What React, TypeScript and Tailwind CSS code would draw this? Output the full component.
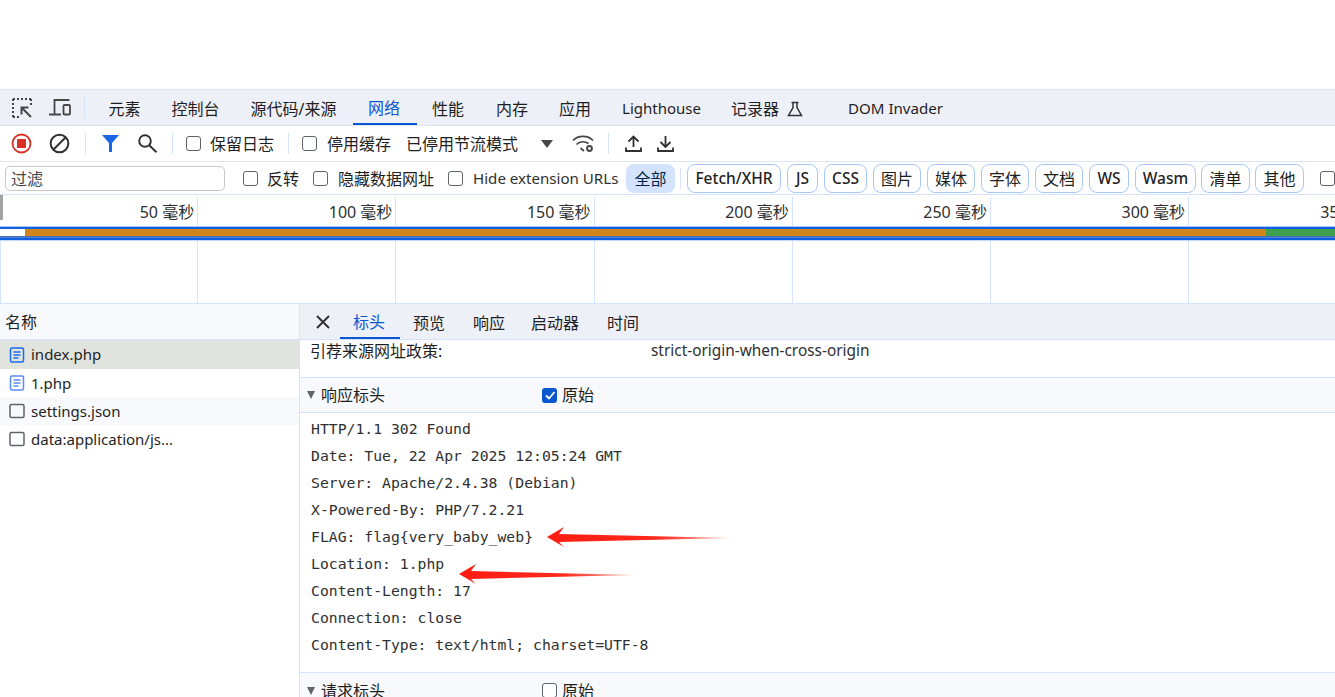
const sans = 'font-["Noto_Sans","Noto_Sans_CJK_SC",sans-serif]';

const mainTabs = [
  { label: '元素', px: 'px-[15.5px]' },
  { label: '控制台', px: 'px-[15.5px]' },
  { label: '源代码/来源', px: 'pl-[15.5px] pr-[16.5px]' },
  { label: '网络', px: 'pl-[15px] pr-[17px]', active: true },
  { label: '性能', px: 'pl-[15px] pr-[16px]' },
  { label: '内存', px: 'px-[16px]' },
  { label: '应用', px: 'pl-[15px] pr-[15.5px]' },
];

const filters = [
  { label: 'Fetch/XHR', w: 'w-[94px]', bold: true },
  { label: 'JS', w: 'w-[31px]', bold: true },
  { label: 'CSS', w: 'w-[43px]', bold: true },
  { label: '图片', w: 'w-[48px]' },
  { label: '媒体', w: 'w-[48px]' },
  { label: '字体', w: 'w-[48px]' },
  { label: '文档', w: 'w-[48px]' },
  { label: 'WS', w: 'w-[40px]', bold: true },
  { label: 'Wasm', w: 'w-[61px]', bold: true },
  { label: '清单', w: 'w-[49px] -ml-px' },
  { label: '其他', w: 'w-[49px] -ml-px' },
];

const ticks = ['50 毫秒', '100 毫秒', '150 毫秒', '200 毫秒', '250 毫秒', '300 毫秒'];

const files = [
  { name: 'index.php', doc: true, bg: 'bg-[#e1e3df]', h: 'h-[29px]' },
  { name: '1.php', doc: true, bg: 'bg-white', h: 'h-[28px]' },
  { name: 'settings.json', doc: false, bg: 'bg-[#f7f9fd]', h: 'h-[28px]' },
  { name: 'data:application/js...', doc: false, bg: 'bg-white', h: 'h-[28px]' },
];

const headers = [
  'HTTP/1.1 302 Found',
  'Date: Tue, 22 Apr 2025 12:05:24 GMT',
  'Server: Apache/2.4.38 (Debian)',
  'X-Powered-By: PHP/7.2.21',
  'FLAG: flag{very_baby_web}',
  'Location: 1.php',
  'Content-Length: 17',
  'Connection: close',
  'Content-Type: text/html; charset=UTF-8',
];

function Box({ className = '' }: { className?: string }) {
  return <span className={`block w-[15px] h-[15px] shrink-0 rounded-[3px] border border-[#5f6368] bg-white ${className}`} />;
}

function Divider({ className = '' }: { className?: string }) {
  return <span className={`block w-px h-[21px] shrink-0 bg-[#d3e3fd] ${className}`} />;
}

function Arrow({ width }: { width: number }) {
  return (
    <svg width={width} height="20" viewBox={`0 0 ${width} 20`} className="block">
      <defs>
        <linearGradient id={`fade${width}`} x1="0" x2="1" y1="0" y2="0">
          <stop offset="0" stopColor="#ff1d12" />
          <stop offset="0.6" stopColor="#ff2a1c" />
          <stop offset="1" stopColor="#ff3a2a" stopOpacity="0.4" />
        </linearGradient>
      </defs>
      <path d={`M0 10 L17 0 L12 7 L${width} 11 L12 15 L17 20 Z`} fill={`url(#fade${width})`} />
    </svg>
  );
}

function DocIcon({ light }: { light?: boolean }) {
  const color = light ? '#5a8cf5' : '#1a6cf0';
  return (
    <svg width="16" height="16" viewBox="0 0 16 16" fill="none" className="shrink-0">
      <rect x="1.5" y="1" width="13" height="14" rx="1.5" stroke={color} strokeWidth="1.5" />
      <path d="M4.5 5h7M4.5 8h7M4.5 11h5" stroke={color} strokeWidth="1.3" />
    </svg>
  );
}

function BlankIcon() {
  return (
    <svg width="16" height="16" viewBox="0 0 16 16" fill="none" className="shrink-0">
      <rect x="1" y="1.5" width="14" height="13" rx="1.5" stroke="#5f6368" strokeWidth="1.5" />
    </svg>
  );
}

function Triangle() {
  return <span className="block w-0 h-0 border-l-[4.5px] border-r-[4.5px] border-t-[8px] border-l-transparent border-r-transparent border-t-[#5f6368]" />;
}

function GridCells({ className = '' }: { className?: string }) {
  return (
    <div className={`flex ${className}`}>
      {ticks.map(t => (
        <div key={t} className="w-[198.2px] shrink-0 border-r first:border-l border-[#d3e3fd]" />
      ))}
    </div>
  );
}

export default function App() {
  return (
    <div className={`h-[697px] w-[1335px] overflow-hidden bg-white text-[#1f1f1f] text-[16px] relative ${sans}`}>
      <div className="h-[89px]" />

      <div className="h-[37px] flex items-stretch bg-[#eef0f7] border-t border-b border-[#dfe4f2]">
        <div className="flex items-center pl-[12px] w-[84px] shrink-0 gap-[17px]">
          <svg width="20" height="20" viewBox="0 0 20 20" fill="none" stroke="#474747" className="shrink-0">
            <path d="M1 1h18M1 1v18M1 19h6M19 1v6" strokeWidth="2" strokeDasharray="2 2" />
            <path d="M9.500 16.500V9.500h7M10 10l9 9" strokeWidth="2" />
          </svg>
          <svg width="22" height="17" viewBox="0 0 22 17" fill="none" stroke="#474747" strokeWidth="1.800" className="shrink-0">
            <path d="M5.500 15V1h15M0 15.500h12" />
            <rect x="14.500" y="6" width="6.500" height="9.500" rx="1" />
          </svg>
        </div>
        <Divider className="self-center" />
        <div className="w-[8px] shrink-0" />
        {mainTabs.map(tab => (
          <div
            key={tab.label}
            className={`flex items-center whitespace-nowrap h-full pt-[2px] ${tab.px} ${tab.active ? 'text-[#0b57d0] border-b-2 border-[#0b57d0]' : ''}`}
          >
            {tab.label}
          </div>
        ))}
        <div className="flex items-center whitespace-nowrap h-full pt-[2px] pl-[15.5px] pr-[15px] text-[15px]">Lighthouse</div>
        <div className="flex items-center whitespace-nowrap h-full pt-[2px] gap-[8px] pl-[15px] pr-[45px]">
          记录器
          <svg width="16" height="16" viewBox="0 0 16 16" fill="none" stroke="#303030" strokeWidth="1.500">
            <path d="M4.500 1.500h7M6 1.500v5L1.500 14.500h13L10 6.500v-5" />
          </svg>
        </div>
        <div className="flex items-center whitespace-nowrap h-full pt-[2px] text-[15.100px]">DOM Invader</div>
      </div>

      <div className="h-[36px] flex items-center border-b border-[#dfe4f2]">
        <div className="w-[11px] shrink-0" />
        <svg width="21" height="21" viewBox="0 0 21 21" fill="none" className="shrink-0">
          <circle cx="10.500" cy="10.500" r="9" stroke="#d93025" strokeWidth="1.800" />
          <rect x="6" y="6" width="9" height="9" rx="0.500" fill="#d93025" />
        </svg>
        <svg width="21" height="21" viewBox="0 0 21 21" fill="none" stroke="#303030" strokeWidth="2" className="ml-[17px] shrink-0">
          <circle cx="10.500" cy="10.500" r="8.800" />
          <path d="M4.500 16.500 16.500 4.500" />
        </svg>
        <Divider className="ml-[15px]" />
        <svg width="17" height="17" viewBox="0 0 17 17" className="ml-[16px] shrink-0">
          <path d="M0 0h17l-7 8v9H7V8z" fill="#1a66e5" />
        </svg>
        <svg width="20" height="19" viewBox="0 0 20 19" fill="none" stroke="#303030" strokeWidth="1.900" className="ml-[19px] shrink-0">
          <circle cx="7" cy="7" r="5.800" />
          <path d="M11.200 11.200 18.500 18.200" />
        </svg>
        <Divider className="ml-[14px]" />
        <Box className="ml-[13px]" />
        <span className="ml-[9px] whitespace-nowrap">保留日志</span>
        <Divider className="ml-[14px]" />
        <Box className="ml-[13px]" />
        <span className="ml-[10px] whitespace-nowrap">停用缓存</span>
        <span className="ml-[15px] whitespace-nowrap">已停用节流模式</span>
        <span className="ml-[23px] block w-0 h-0 shrink-0 border-l-[6px] border-r-[6px] border-t-[8px] border-l-transparent border-r-transparent border-t-[#474747]" />
        <svg width="23" height="19" viewBox="0 0 23 19" fill="none" stroke="#474747" strokeWidth="1.700" className="ml-[19px] shrink-0">
          <path d="M1 6.500C6 1 16 1 21 6.500M4.500 10.500C8 7 13 7 16.500 9.500M8.500 14l3.500 3" />
          <circle cx="17.500" cy="14.500" r="2.400" strokeWidth="2" />
        </svg>
        <Divider className="ml-[13px]" />
        <svg width="17" height="17" viewBox="0 0 17 17" fill="none" stroke="#303030" strokeWidth="1.800" className="ml-[16px] shrink-0">
          <path d="M8.500 12V1.500M3.500 6.500l5-5 5 5M1 12.500v3.500h15v-3.500" />
        </svg>
        <svg width="17" height="17" viewBox="0 0 17 17" fill="none" stroke="#303030" strokeWidth="1.800" className="ml-[15px] shrink-0">
          <path d="M8.500 1v11M3.500 7l5 5 5-5M1 12.500v3.500h15v-3.500" />
        </svg>
      </div>

      <div className="h-[33px] flex items-center border-b border-[#d3e3fd] whitespace-nowrap">
        <div className="ml-[5px] w-[220px] h-[25px] shrink-0 rounded-[5px] border border-[#c7c7c7] px-[5px] pt-px flex items-center text-[#474747]">过滤</div>
        <Box className="ml-[18px]" />
        <span className="ml-[9px] pt-px">反转</span>
        <Box className="ml-[14px]" />
        <span className="ml-[10px] pt-px">隐藏数据网址</span>
        <Box className="ml-[14px]" />
        <span className="ml-[10px] pt-px text-[15.100px] text-[#303030] w-[146px]">Hide extension URLs</span>
        <span className="ml-[7px] w-[49px] h-[29px] shrink-0 rounded-[8px] bg-[#d3e3fd] pt-px text-[#041e49] flex items-center justify-center">全部</span>
        <Divider className="ml-[5px]" />
        <div className="ml-[6px] flex gap-[6px]">
          {filters.map(f => (
            <span
              key={f.label}
              className={`${f.w} h-[29px] shrink-0 rounded-[8px] border border-[#a8c7fa] pt-px flex items-center justify-center text-[#1f1f1f] ${f.bold ? 'font-medium text-[15.500px]' : ''}`}
            >
              {f.label}
            </span>
          ))}
        </div>
        <Box className="ml-[16px]" />
      </div>

      <div className="h-[109px] border-b border-[#d3e3fd] overflow-hidden relative">
        <div className="absolute left-0 top-0 w-[3px] h-[25px] bg-[#a3a3a3]" />
        <div className="flex h-[31px] text-[#303030] pt-[2px] whitespace-nowrap">
          {ticks.map(t => (
            <div key={t} className="w-[198.2px] shrink-0 border-r border-[#d3e3fd] flex items-center justify-end pr-[3px]">{t}</div>
          ))}
          <div className="pl-[131px] flex items-center">350 毫秒</div>
        </div>
        <div className="h-px bg-[#a8c7fa]" />
        <div className="h-[2px] bg-[#0f5fe0]" />
        <div className="h-[7px] flex">
          <div className="w-[25px] bg-white" />
          <div className="flex-1 bg-[#d0861b]" />
          <div className="w-[69px] bg-[#3fa14e]" />
        </div>
        <div className="h-px bg-[#3f6fb0]" />
        <div className="h-px bg-[#4b7fd8]" />
        <div className="h-[2px] bg-[#0f5fe0]" />
        <div className="h-px bg-[#c2d7fb]" />
        <GridCells className="h-[62px]" />
      </div>

      <div className="flex h-[393px]">
        <div className="w-[300px] shrink-0 border-r border-[#d3e3fd]">
          <div className="h-[36px] flex items-center pl-[5px] pt-px bg-[#f7f9fd] border-b border-[#d3e3fd]">名称</div>
          {files.map((f, i) => (
            <div key={f.name} className={`${f.h} ${f.bg} flex items-center pl-[9px] gap-[6px] whitespace-nowrap text-[15px]`}>
              {f.doc ? <DocIcon light={i === 1} /> : <BlankIcon />}
              {f.name}
            </div>
          ))}
        </div>

        <div className="flex-1 min-w-0">
          <div className="h-[36px] flex items-stretch bg-[#eef0f7] border-b border-[#d3e3fd]">
            <svg width="16" height="16" viewBox="0 0 16 16" fill="none" stroke="#303030" strokeWidth="1.900" className="self-center ml-[15px] mr-[9px]">
              <path d="M2 2l12 12M14 2 2 14" />
            </svg>
            <span className="flex items-center pt-[2px] pl-[13px] w-[60px] text-[#0b57d0] border-b-2 border-[#0b57d0]">标头</span>
            <span className="flex items-center pt-[2px] pl-[13px] pr-[15px]">预览</span>
            <span className="flex items-center pt-[2px] pl-[13px] pr-[13px]">响应</span>
            <span className="flex items-center pt-[2px] pl-[13px] pr-[13px]">启动器</span>
            <span className="flex items-center pt-[2px] pl-[15px]">时间</span>
          </div>

          <div className="h-[38px] flex pl-[10px] border-b border-[#d3e3fd] whitespace-nowrap leading-[22px]">
            <span className="w-[341px]">引荐来源网址政策:</span>
            <span className="text-[15.400px] text-[#303030]">strict-origin-when-cross-origin</span>
          </div>

          <div className="h-[35px] flex items-center pl-[7px] bg-[#f7f9fd] border-b border-[#d3e3fd]">
            <Triangle />
            <span className="ml-[6px] w-[221px]">响应标头</span>
            <span className="w-[15px] h-[15px] rounded-[3px] bg-[#0b57d0] flex items-center justify-center">
              <svg width="12" height="12" viewBox="0 0 12 12" fill="none" stroke="white" strokeWidth="1.800">
                <path d="M2 6.500 5 9.500 10.500 3" />
              </svg>
            </span>
            <span className="ml-[5px]">原始</span>
          </div>

          <div className='pt-[3px] pl-[11px] pb-[13px] border-b border-[#d3e3fd] font-["DejaVu_Sans_Mono",monospace] text-[14.750px] text-[#303030]'>
            {headers.map(line => (
              <div key={line} className="h-[27px] flex items-center whitespace-pre">{line}</div>
            ))}
          </div>

          <div className="h-[35px] flex items-center pl-[7px] bg-[#f7f9fd]">
            <Triangle />
            <span className="ml-[6px] w-[221px]">请求标头</span>
            <Box />
            <span className="ml-[5px]">原始</span>
          </div>
        </div>
      </div>

      <div className="absolute left-[547px] top-[527px]"><Arrow width={184} /></div>
      <div className="absolute left-[459px] top-[564px]"><Arrow width={176} /></div>
    </div>
  );
}
